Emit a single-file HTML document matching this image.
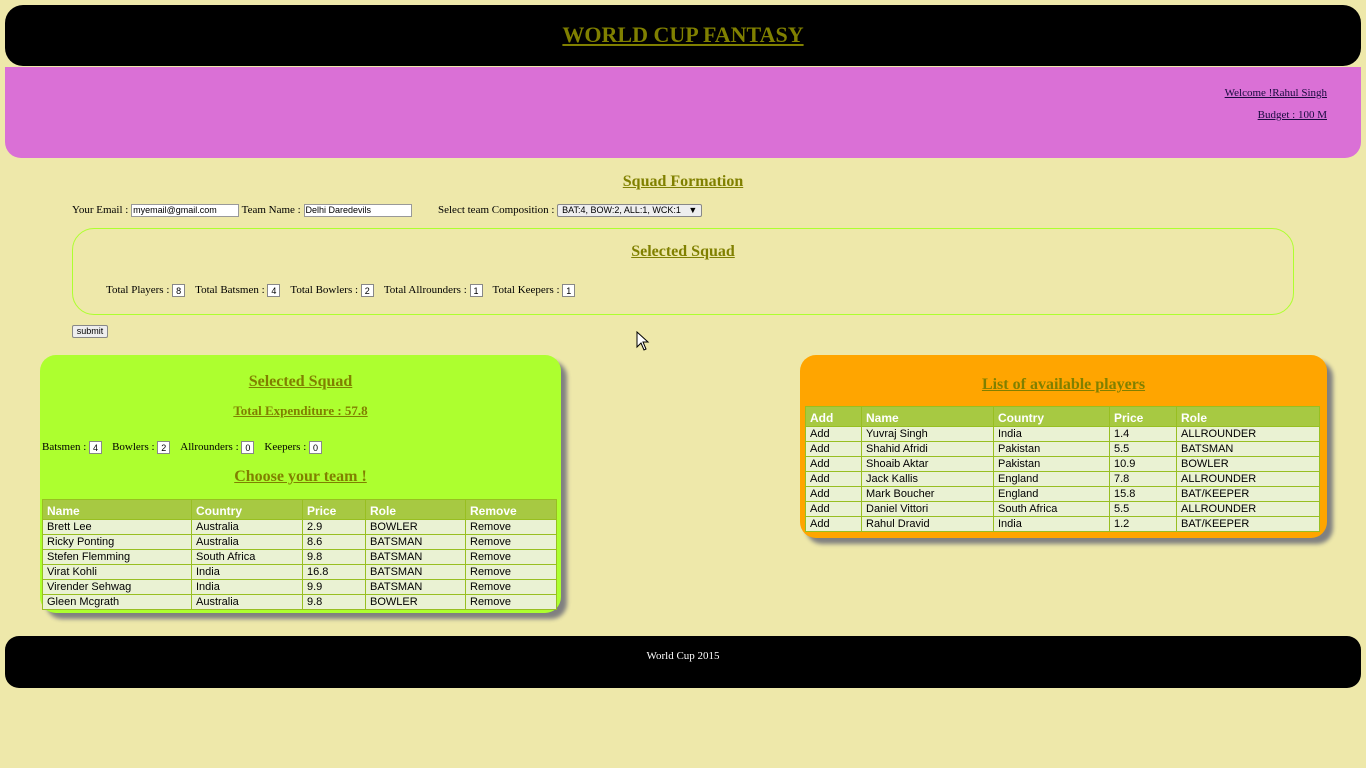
<!DOCTYPE html>
<html><head><meta charset="utf-8"><style>
*{box-sizing:border-box}
body{margin:0;width:1366px;height:768px;background:#EEE8AA;font-family:"Liberation Serif",serif;position:relative;overflow:hidden}
.abs{position:absolute}
.hdr{left:5px;top:5px;width:1356px;height:61px;background:#000;border-radius:18px;text-align:center}
.hdr a{color:#808000;font-weight:bold;font-size:22px;text-decoration:underline;line-height:60px}
.pink{left:5px;top:67px;width:1356px;height:91px;background:#DA70D6;border-radius:0 0 16px 16px}
.pink a{position:absolute;right:34px;font-size:11px;color:#1a0a40;text-decoration:underline}
h2{margin:0;color:#808000;text-decoration:underline;font-weight:bold;text-align:center}
.lbl{font-size:11px;color:#000}
.in{display:inline-block;border:1px solid #999;background:#fff;font-family:"Liberation Sans",sans-serif;font-size:9px;height:13px;line-height:11px;padding:0 1px;vertical-align:middle}
.num{display:inline-block;border:1px solid #888;background:#fff;font-family:"Liberation Sans",sans-serif;font-size:9px;width:13px;height:13px;line-height:13px;text-align:center;vertical-align:middle;margin-right:10px}
.box{left:72px;top:228px;width:1222px;height:87px;border:1px solid #ADFF2F;border-radius:22px}
table{border-collapse:collapse;font-family:"Liberation Sans",sans-serif;font-size:11px;position:absolute}
th{background:#A7C942;color:#fff;text-align:left;font-size:12px;height:20px;padding:2px 4px 0;border:1px solid #98bf21}
td{background:#EAF2D3;height:15px;padding:0 4px;border:1px solid #98bf21;color:#000;line-height:13px}
.green{left:40px;top:355px;width:521px;height:258px;background:#ADFF2F;border-radius:16px;box-shadow:6px 6px 4px #808080}
.orange{left:800px;top:355px;width:527px;height:183px;background:#FFA500;border-radius:16px;box-shadow:6px 6px 4px #808080}
.foot{left:5px;top:636px;width:1356px;height:52px;background:#000;border-radius:14px;color:#fff;font-size:11px;text-align:center;padding-top:14px}
</style></head><body>
<div class="abs hdr"><a>WORLD CUP FANTASY</a></div>
<div class="abs pink"><a style="top:20px">Welcome !Rahul Singh</a><a style="top:42px">Budget : 100 M</a></div>
<h2 class="abs" style="left:0;width:1366px;top:173px;font-size:16px">Squad Formation</h2>
<div class="abs lbl" style="left:72px;top:204px;white-space:nowrap">Your Email : <span class="in" style="width:108px">myemail@gmail.com</span> Team Name : <span class="in" style="width:108px">Delhi Daredevils</span></div>
<div class="abs lbl" style="left:438px;top:204px;white-space:nowrap">Select team Composition : <span class="in" style="width:145px;background:#eee;border-color:#888;padding-left:4px;border-radius:2px">BAT:4, BOW:2, ALL:1, WCK:1 &nbsp;&nbsp;▼</span></div>
<div class="abs box"></div>
<h2 class="abs" style="left:0;width:1366px;top:243px;font-size:16px">Selected Squad</h2>
<div class="abs lbl" style="left:106px;top:284px;white-space:nowrap">Total Players : <span class="num">8</span>Total Batsmen : <span class="num">4</span>Total Bowlers : <span class="num">2</span>Total Allrounders : <span class="num">1</span>Total Keepers : <span class="num">1</span></div>
<div class="abs" style="left:72px;top:325px;width:36px;height:13px;border:1px solid #888;background:#eee;border-radius:2px;font-family:'Liberation Sans',sans-serif;font-size:9px;text-align:center;line-height:11px">submit</div>
<svg class="abs" style="left:636px;top:331px" width="14" height="21" viewBox="0 0 14 21"><path d="M1 1 L1 16 L5 12 L8 19 L10 18 L7 11 L12 11 Z" fill="#fff" stroke="#000" stroke-width="1"/></svg>

<div class="abs green"></div>
<h2 class="abs" style="left:40px;width:521px;top:373px;font-size:16px">Selected Squad</h2>
<h2 class="abs" style="left:40px;width:521px;top:403px;font-size:13px">Total Expenditure : 57.8</h2>
<div class="abs lbl" style="left:42px;top:441px;white-space:nowrap">Batsmen : <span class="num">4</span>Bowlers : <span class="num">2</span>Allrounders : <span class="num">0</span>Keepers : <span class="num">0</span></div>
<h2 class="abs" style="left:40px;width:521px;top:468px;font-size:16px">Choose your team !</h2>
<table style="left:42px;top:499px;width:515px">
<tr><th style="width:149px">Name</th><th style="width:111px">Country</th><th style="width:63px">Price</th><th style="width:100px">Role</th><th>Remove</th></tr>
<tr><td>Brett Lee</td><td>Australia</td><td>2.9</td><td>BOWLER</td><td>Remove</td></tr>
<tr><td>Ricky Ponting</td><td>Australia</td><td>8.6</td><td>BATSMAN</td><td>Remove</td></tr>
<tr><td>Stefen Flemming</td><td>South Africa</td><td>9.8</td><td>BATSMAN</td><td>Remove</td></tr>
<tr><td>Virat Kohli</td><td>India</td><td>16.8</td><td>BATSMAN</td><td>Remove</td></tr>
<tr><td>Virender Sehwag</td><td>India</td><td>9.9</td><td>BATSMAN</td><td>Remove</td></tr>
<tr><td>Gleen Mcgrath</td><td>Australia</td><td>9.8</td><td>BOWLER</td><td>Remove</td></tr>
</table>

<div class="abs orange"></div>
<h2 class="abs" style="left:800px;width:527px;top:376px;font-size:16px">List of available players</h2>
<table style="left:805px;top:406px;width:515px">
<tr><th style="width:56px">Add</th><th style="width:132px">Name</th><th style="width:116px">Country</th><th style="width:67px">Price</th><th>Role</th></tr>
<tr><td>Add</td><td>Yuvraj Singh</td><td>India</td><td>1.4</td><td>ALLROUNDER</td></tr>
<tr><td>Add</td><td>Shahid Afridi</td><td>Pakistan</td><td>5.5</td><td>BATSMAN</td></tr>
<tr><td>Add</td><td>Shoaib Aktar</td><td>Pakistan</td><td>10.9</td><td>BOWLER</td></tr>
<tr><td>Add</td><td>Jack Kallis</td><td>England</td><td>7.8</td><td>ALLROUNDER</td></tr>
<tr><td>Add</td><td>Mark Boucher</td><td>England</td><td>15.8</td><td>BAT/KEEPER</td></tr>
<tr><td>Add</td><td>Daniel Vittori</td><td>South Africa</td><td>5.5</td><td>ALLROUNDER</td></tr>
<tr><td>Add</td><td>Rahul Dravid</td><td>India</td><td>1.2</td><td>BAT/KEEPER</td></tr>
</table>

<div class="abs foot">World Cup 2015</div>
</body></html>
